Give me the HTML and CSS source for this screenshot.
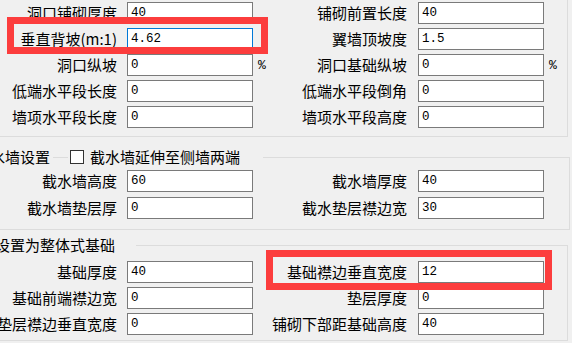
FILE: index.html
```html
<!DOCTYPE html>
<html lang="zh-CN">
<head>
<meta charset="utf-8">
<title>参数设置</title>
<link rel="stylesheet" href="styles.css">
</head>
<body>
<div class="dialog">
  <fieldset class="group group-top">
    <div class="grid">
      <label class="lbl">洞口铺砌厚度</label><input class="field" value="40"><span class="unit"></span>
      <label class="lbl lbl-r">铺砌前置长度</label><input class="field" value="40"><span class="unit"></span>

      <label class="lbl">垂直背坡(m:1)</label><input class="field focus" value="4.62"><span class="unit"></span>
      <label class="lbl lbl-r">翼墙顶坡度</label><input class="field" value="1.5"><span class="unit"></span>

      <label class="lbl">洞口纵坡</label><input class="field" value="0"><span class="unit">%</span>
      <label class="lbl lbl-r">洞口基础纵坡</label><input class="field" value="0"><span class="unit">%</span>

      <label class="lbl">低端水平段长度</label><input class="field" value="0"><span class="unit"></span>
      <label class="lbl lbl-r">低端水平段倒角</label><input class="field" value="0"><span class="unit"></span>

      <label class="lbl">墙项水平段长度</label><input class="field" value="0"><span class="unit"></span>
      <label class="lbl lbl-r">墙项水平段高度</label><input class="field" value="0"><span class="unit"></span>
    </div>
  </fieldset>

  <fieldset class="group group-wall">
    <legend class="legend legend-wall"><span>截水墙设置</span><span class="seg"></span><span class="check"><span class="box"></span>截水墙延伸至侧墙两端</span></legend>
    <div class="grid grid-wall">
      <label class="lbl">截水墙高度</label><input class="field" value="60"><span class="unit"></span>
      <label class="lbl lbl-r">截水墙厚度</label><input class="field" value="40"><span class="unit"></span>

      <label class="lbl">截水墙垫层厚</label><input class="field" value="0"><span class="unit"></span>
      <label class="lbl lbl-r">截水垫层襟边宽</label><input class="field" value="30"><span class="unit"></span>
    </div>
  </fieldset>

  <fieldset class="group group-base">
    <legend class="legend legend-base">设置为整体式基础</legend>
    <div class="grid">
      <label class="lbl">基础厚度</label><input class="field" value="40"><span class="unit"></span>
      <label class="lbl lbl-r">基础襟边垂直宽度</label><input class="field" value="12"><span class="unit"></span>

      <label class="lbl">基础前端襟边宽</label><input class="field" value="0"><span class="unit"></span>
      <label class="lbl lbl-r">垫层厚度</label><input class="field" value="0"><span class="unit"></span>

      <label class="lbl">垫层襟边垂直宽度</label><input class="field" value="0"><span class="unit"></span>
      <label class="lbl lbl-r">铺砌下部距基础高度</label><input class="field" value="40"><span class="unit"></span>
    </div>
  </fieldset>
</div>

<div class="mark mark-1"></div>
<div class="mark mark-2"></div>
</body>
</html>
```

FILE: styles.css
```css
html, body {
  margin: 0;
  padding: 0;
}
body {
  width: 572px;
  height: 343px;
  overflow: hidden;
  background: #f0f0f0;
  font-family: "Noto Sans CJK SC", "Noto Sans", sans-serif;
  font-size: 15px;
  color: #000;
  position: relative;
}
.dialog {
  display: flex;
  flex-direction: column;
}
.group {
  box-sizing: border-box;
  width: 608px;
  margin: 0 0 0 -40px;
  padding: 0;
  border: 1px solid #dcdcdc;
  min-width: 0;
}
.group-top {
  margin-top: -20px;
  padding-top: 21px;
  padding-bottom: 8px;
}
.group-wall {
  margin-top: 11px;
  width: 610px;
  padding-top: 4px;
  padding-bottom: 10px;
}
.group-base {
  margin-top: 6px;
  padding-top: 7px;
  padding-bottom: 5px;
}
.legend {
  line-height: 18px;
  height: 18px;
  padding: 0;
  display: flex;
  align-items: center;
}
.legend-wall {
  margin-left: 12px;
  padding: 0 23px 0 2px;
}
.legend-base {
  margin-left: 32px;
  padding: 0 21px 0 2px;
}
.seg {
  width: 15px;
  height: 1px;
  background: #dcdcdc;
  margin: 1px 2px 0 3px;
}
.check {
  display: flex;
  align-items: center;
}
.box {
  box-sizing: border-box;
  width: 14px;
  height: 14px;
  border: 1px solid #333;
  background: #fff;
  margin-right: 6px;
}
.grid {
  display: grid;
  margin-left: 39px;
  grid-template-columns: 127px 126px 37px 128px 126px 1fr;
  row-gap: 4px;
  align-items: center;
}
.grid-wall {
  row-gap: 5px;
}
.lbl {
  display: flex;
  justify-content: flex-end;
  min-width: 0;
  padding-right: 10px;
  white-space: nowrap;
  line-height: 18px;
}
.lbl-r {
  padding-right: 11px;
}
.field {
  box-sizing: border-box;
  width: 126px;
  height: 22px;
  margin: 0;
  border: 1px solid #7a7a7a;
  border-radius: 0;
  background: #fff;
  padding: 0 3px;
  font-family: "Liberation Mono", monospace;
  font-size: 12.5px;
  color: #000;
  outline: none;
}
.field.focus {
  border-color: #0078d7;
}
.unit {
  padding-left: 5px;
  font-family: "Liberation Mono", monospace;
  font-size: 13px;
}
.mark {
  position: absolute;
  box-sizing: border-box;
  border: 7px solid #fc3d3d;
}
.mark-1 {
  left: 7px;
  top: 17px;
  width: 261px;
  height: 37px;
}
.mark-2 {
  left: 266px;
  top: 250px;
  width: 286px;
  height: 40px;
}
```
